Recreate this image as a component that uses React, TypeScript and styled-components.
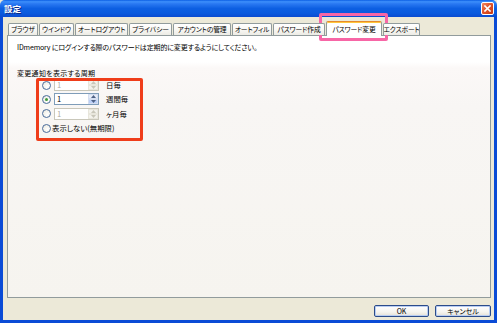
import React from 'react';
import styled, { createGlobalStyle, css } from 'styled-components';

const Global = createGlobalStyle`
  html, body { margin: 0; padding: 0; width: 497px; height: 323px; overflow: hidden; background: #ece9d8; }
  body {
    font-family: "Noto Sans CJK JP", "Noto Sans", sans-serif;
    font-feature-settings: "palt";
    font-weight: 400;
  }
  #root { width: 497px; height: 323px; }
  * { box-sizing: border-box; }
`;

const FONT = 7;

const Window = styled.div`
  position: relative;
  width: 497px;
  height: 323px;
  display: flex;
  flex-direction: column;
  background: #ece9d8;
`;

const TitleBar = styled.div`
  height: 17px;
  flex: none;
  display: flex;
  align-items: center;
  justify-content: space-between;
  padding: 0 3px 0 4px;
  background: linear-gradient(180deg, #0b5ee4 0%, #3d8ffb 10%, #2a79f2 22%, #0d5fe2 50%, #0a5ade 78%, #0a4bd0 100%);
  border-radius: 5px 5px 0 0;
`;

const Title = styled.span`
  color: #fff;
  font-size: 8.5px;
  font-weight: 700;
  line-height: 1;
  text-shadow: 1px 1px 0 #0a2a8a;
`;

const CloseButton = styled.div`
  width: 13px;
  height: 13px;
  border: 1px solid #fff;
  border-radius: 2px;
  background: linear-gradient(135deg, #f08a64 0%, #e2542a 45%, #c83a12 100%);
  display: flex;
  align-items: center;
  justify-content: center;
`;

const Body = styled.div`
  flex: 1;
  display: flex;
  flex-direction: column;
  border: 3px solid #0a4bd6;
  border-top: none;
  padding: 4px 3px 3px 4px;
  min-height: 0;
`;

const TabStrip = styled.div`
  height: 14px;
  flex: none;
  display: flex;
  align-items: flex-end;
  gap: 1px;
  padding-left: 1px;
  position: relative;
  z-index: 1;
`;

const Tab = styled.div<{ $w: number; $active?: boolean }>`
  width: ${p => p.$w}px;
  height: 12px;
  display: flex;
  align-items: center;
  justify-content: center;
  font-size: 6.8px;
  letter-spacing: -0.15px;
  line-height: 1;
  color: #000;
  white-space: nowrap;
  overflow: hidden;
  border: 1px solid #919b9c;
  border-bottom: none;
  border-radius: 2px 2px 0 0;
  background: linear-gradient(180deg, #ffffff 0%, #f9f8f4 50%, #ecebe5 100%);
  ${p => p.$active && css`
    height: 15px;
    margin-bottom: -1px;
    background: #fff;
    border-top: 1px solid #e68b2c;
    box-shadow: inset 0 1px 0 #ffc73c;
    padding-top: 1px;
  `}
`;

const Panel = styled.div`
  position: relative;
  flex: 1;
  border: 1px solid #919b9c;
  background: linear-gradient(180deg, #ffffff 0px, #ffffff 26px, #fbf8f7 32px, #f8f6f4 70px, #f6f4ef 100%);
  padding: 6px 9px;
  display: flex;
  flex-direction: column;
  font-size: ${FONT}px;
  color: #000;
`;

const Text = styled.div<{ $mt?: number; $ls?: number }>`
  line-height: 10px;
  height: 10px;
  white-space: nowrap;
  margin-top: ${p => p.$mt ?? 0}px;
  letter-spacing: ${p => p.$ls ?? 0}px;
`;

const Options = styled.div`
  display: flex;
  flex-direction: column;
  margin-left: 25px;
`;

const Row = styled.div`
  height: 14.3px;
  display: flex;
  align-items: center;
`;

const Radio = styled.span<{ $checked?: boolean }>`
  width: 9px;
  height: 9px;
  flex: none;
  border-radius: 50%;
  border: 1px solid #4a6c9c;
  background: radial-gradient(circle at 65% 65%, #ffffff 0%, #f2f1ea 60%, #dcdad0 100%);
  display: flex;
  align-items: center;
  justify-content: center;
  &::after {
    content: '';
    display: ${p => (p.$checked ? 'block' : 'none')};
    width: 3.5px;
    height: 3.5px;
    border-radius: 50%;
    background: #3f9a3a;
  }
`;

const Spin = styled.div<{ $disabled?: boolean }>`
  width: 45px;
  height: 12px;
  margin-left: 3px;
  display: flex;
  border: 1px solid ${p => (p.$disabled ? '#c9c7ba' : '#7f9db9')};
  background: #fff;
`;

const SpinValue = styled.span<{ $disabled?: boolean }>`
  flex: 1;
  padding-left: 2px;
  line-height: 10px;
  font-size: 7.5px;
  color: ${p => (p.$disabled ? '#aca899' : '#000')};
`;

const SpinButtons = styled.div`
  width: 10px;
  display: flex;
  flex-direction: column;
`;

const SpinHalf = styled.div<{ $disabled?: boolean; $hot?: boolean }>`
  flex: 1;
  display: flex;
  align-items: center;
  justify-content: center;
  background: ${p => (p.$disabled ? '#f3f2ec' : p.$hot ? '#bcd0f7' : '#e6ecf8')};
  border: 1px solid ${p => (p.$disabled ? '#e8e6dc' : '#d5def0')};
`;

const Label = styled.span<{ $ml: number }>`
  margin-left: ${p => p.$ml}px;
  white-space: nowrap;
  line-height: 10px;
  font-size: 7.4px;
`;

const Annotation = styled.div<{ $color: string; $w: number }>`
  position: absolute;
  border: ${p => p.$w}px solid ${p => p.$color};
  border-radius: 2px;
  pointer-events: none;
`;

const Footer = styled.div`
  flex: none;
  display: flex;
  justify-content: flex-end;
  gap: 6px;
  margin-top: 7px;
  height: 12px;
`;

const Button = styled.div<{ $w: number }>`
  width: ${p => p.$w}px;
  height: 12px;
  display: flex;
  align-items: center;
  justify-content: center;
  font-size: ${FONT}px;
  line-height: 1;
  color: #000;
  border: 1px solid #2c4c8a;
  border-radius: 2px;
  background: linear-gradient(180deg, #ffffff 0%, #f5f4f0 60%, #e4e0d6 100%);
  box-shadow: inset 0 0 0 1px #b8cdf2;
`;

const Arrow = ({ up, color }: { up?: boolean; color: string }) => (
  <svg width="5" height="3" viewBox="0 0 5 3">
    <path d={up ? 'M0 3 L2.5 0 L5 3 Z' : 'M0 0 L2.5 3 L5 0 Z'} fill={color} />
  </svg>
);

const SpinBox = ({ disabled }: { disabled?: boolean }) => {
  const c = disabled ? '#c9c7ba' : '#4d6185';
  return (
    <Spin $disabled={disabled}>
      <SpinValue $disabled={disabled}>1</SpinValue>
      <SpinButtons>
        <SpinHalf $disabled={disabled}><Arrow up color={c} /></SpinHalf>
        <SpinHalf $disabled={disabled} $hot={!disabled}><Arrow color={c} /></SpinHalf>
      </SpinButtons>
    </Spin>
  );
};

const tabs = [
  { label: 'ブラウザ', w: 30 },
  { label: 'ウインドウ', w: 35 },
  { label: 'オートログアウト', w: 53 },
  { label: 'プライバシー', w: 43 },
  { label: 'アカウントの管理', w: 58 },
  { label: 'オートフィル', w: 40 },
  { label: 'パスワード作成', w: 52 },
  { label: 'パスワード変更', w: 56, active: true },
  { label: 'エクスポート', w: 37 },
];

const periods = [
  { label: '日毎', checked: false, disabled: true },
  { label: '週間毎', checked: true, disabled: false },
  { label: 'ヶ月毎', checked: false, disabled: true },
];

export default function App() {
  return (
    <>
      <Global />
      <Window>
        <TitleBar>
          <Title>設定</Title>
          <CloseButton>
            <svg width="7" height="7" viewBox="0 0 7 7">
              <path d="M1 1 L6 6 M6 1 L1 6" stroke="#fff" strokeWidth="1.6" strokeLinecap="square" />
            </svg>
          </CloseButton>
        </TitleBar>
        <Body>
          <TabStrip>
            {tabs.map(t => (
              <Tab key={t.label} $w={t.w} $active={t.active}>{t.label}</Tab>
            ))}
          </TabStrip>
          <Panel>
            <Text $ls={-0.15}>IDmemory にログインする際のパスワードは定期的に変更するようにしてください。</Text>
            <Text $mt={16} $ls={0.3}>変更通知を表示する周期</Text>
            <Options>
              {periods.map(p => (
                <Row key={p.label}>
                  <Radio $checked={p.checked} />
                  <SpinBox disabled={p.disabled} />
                  <Label $ml={7}>{p.label}</Label>
                </Row>
              ))}
              <Row>
                <Radio />
                <Label $ml={1}>表示しない(無期限)</Label>
              </Row>
            </Options>
            <Annotation $color="#ef3d1a" $w={3} style={{ left: 28, top: 42, width: 107, height: 63 }} />
          </Panel>
          <Footer>
            <Button $w={55}>OK</Button>
            <Button $w={56}>キャンセル</Button>
          </Footer>
        </Body>
        <Annotation $color="#f766a6" $w={3} style={{ left: 319, top: 13, width: 69, height: 28 }} />
      </Window>
    </>
  );
}
